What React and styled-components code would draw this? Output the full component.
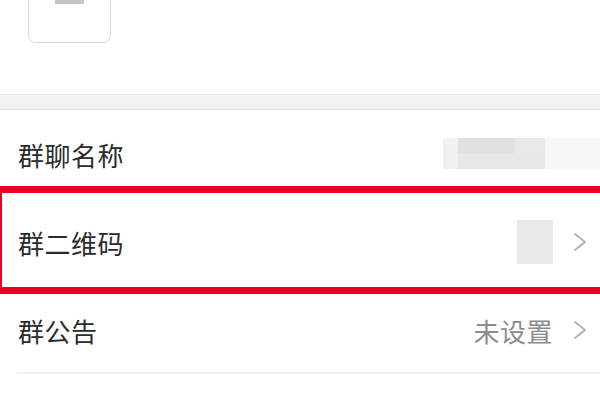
import React from "react";
import styled, { createGlobalStyle } from "styled-components";

const GlobalStyle = createGlobalStyle`
  html, body {
    margin: 0;
    padding: 0;
    background: #ffffff;
  }
  body {
    font-family: "Noto Sans CJK SC", "Noto Sans", sans-serif;
    overflow: hidden;
  }
`;

const Page = styled.div`
  width: 600px;
  height: 400px;
  overflow: hidden;
  background: #ffffff;
`;

const MembersArea = styled.div`
  height: 94px;
  padding-left: 28px;
  display: flex;
  align-items: flex-start;
`;

const RemoveButton = styled.div`
  width: 81px;
  height: 81px;
  margin-top: -40px;
  border: 1px solid #dadada;
  border-radius: 8px;
  display: flex;
  align-items: center;
  justify-content: center;
  box-sizing: content-box;
`;

const MinusBar = styled.div`
  width: 29px;
  height: 5px;
  background: #c4c4c4;
`;

const GapBand = styled.div`
  height: 14px;
  background: #f2f2f2;
  border-top: 1px solid #e4e4e4;
  border-bottom: 1px solid #e4e4e4;
`;

const List = styled.div`
  display: flex;
  flex-direction: column;
`;

const Row = styled.div`
  position: relative;
  height: 88px;
  display: flex;
  align-items: center;
  justify-content: space-between;
  padding: 0 13px 0 18px;

  &::after {
    content: "";
    display: ${(p) => (p.$line ? "block" : "none")};
    position: absolute;
    left: 17px;
    right: 0;
    bottom: 0;
    height: 2px;
    background: #f0f0f0;
  }
`;

const Label = styled.span`
  font-size: 26px;
  color: #2b2b2b;
  letter-spacing: 0.5px;
`;

const Right = styled.div`
  display: flex;
  align-items: center;
  gap: 20px;
`;

const Value = styled.span`
  font-size: 26px;
  color: #8c8c8c;
  letter-spacing: 0.5px;
`;

const Blurred = styled.div`
  display: grid;
  grid-template-columns: 15px 57px 30px 55px;
  grid-template-rows: 15px 16px;
  margin-right: -13px;
  margin-top: -2px;
`;

const Pixel = styled.div`
  background: ${(p) => p.$c};
  grid-row: ${(p) => p.$row || "auto"};
  grid-column: ${(p) => p.$col || "auto"};
`;

const QrThumb = styled.div`
  width: 36px;
  height: 44px;
  background: #e9e9e9;
`;

const Highlight = styled.div`
  position: absolute;
  left: -5px;
  right: -10px;
  top: -12px;
  bottom: -8px;
  border: 7px solid #ec0022;
  pointer-events: none;
`;

const Chevron = () => (
  <svg width="14" height="20" viewBox="0 0 14 20">
    <path
      d="M2 2 L12 10 L2 18"
      fill="none"
      stroke="#b3b3b3"
      strokeWidth="2"
      strokeLinecap="round"
      strokeLinejoin="round"
    />
  </svg>
);

const App = () => {
  return (
    <Page>
      <GlobalStyle />
      <MembersArea>
        <RemoveButton>
          <MinusBar />
        </RemoveButton>
      </MembersArea>
      <GapBand />
      <List>
        <Row>
          <Label>群聊名称</Label>
          <Blurred>
            <Pixel $c="#f1f1f1" $row="1 / 3" $col="1" />
            <Pixel $c="#e1e1e1" $row="1" $col="2" />
            <Pixel $c="#e8e8e8" $row="1" $col="3" />
            <Pixel $c="#e7e7e7" $row="2" $col="2 / 4" />
            <Pixel $c="#f7f7f7" $row="1 / 3" $col="4" />
          </Blurred>
        </Row>
        <Row>
          <Label>群二维码</Label>
          <Right>
            <QrThumb />
            <Chevron />
          </Right>
          <Highlight />
        </Row>
        <Row $line>
          <Label>群公告</Label>
          <Right>
            <Value>未设置</Value>
            <Chevron />
          </Right>
        </Row>
      </List>
    </Page>
  );
};

export default App;
